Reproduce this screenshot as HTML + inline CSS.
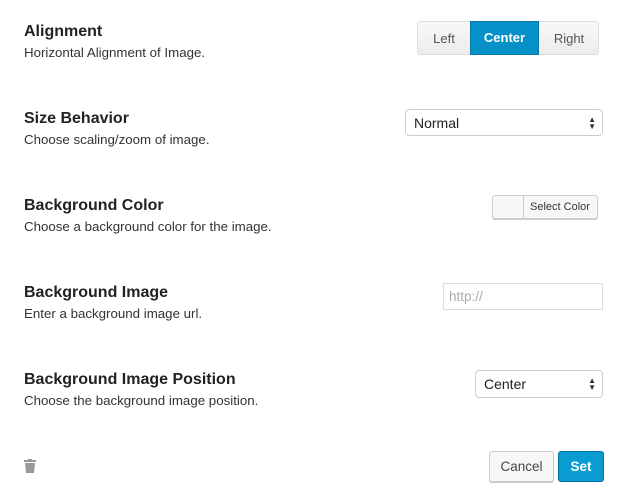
<!DOCTYPE html>
<html><head><style>
body{margin:0;width:620px;height:497px;background:#fff;font-family:"Liberation Sans",sans-serif;position:relative;overflow:hidden;color:#222}
.t{position:absolute;left:24px;font-weight:bold;font-size:16px;color:#222}
.d{position:absolute;left:24px;font-size:13.3px;color:#333}
.a{position:absolute;box-sizing:border-box}
.sel{border:1px solid #ccc;border-radius:4px;background:#fff;font-size:14px;padding-left:8px;display:flex;align-items:center}
.arr{position:absolute;right:6px;top:50%;transform:translateY(-50%);font-size:8px;line-height:7px;color:#333}
</style></head><body>
<div class="t" style="top:23px">Alignment</div>
<div class="d" style="top:45px">Horizontal Alignment of Image.</div>
<div class="t" style="top:110px">Size Behavior</div>
<div class="d" style="top:132px">Choose scaling/zoom of image.</div>
<div class="t" style="top:197px">Background Color</div>
<div class="d" style="top:219px">Choose a background color for the image.</div>
<div class="t" style="top:284px">Background Image</div>
<div class="d" style="top:306px">Enter a background image url.</div>
<div class="t" style="top:371px">Background Image Position</div>
<div class="d" style="top:393px">Choose the background image position.</div>

<div class="a" style="left:417px;top:21px;width:182px;height:34px;border:1px solid #ddd;border-radius:3px;background:linear-gradient(#f8f8f8,#ececec);font-size:13px;color:#555">
<span style="position:absolute;left:0;width:52px;top:9px;text-align:center">Left</span>
<span style="position:absolute;left:121px;width:60px;top:9px;text-align:center">Right</span>
</div>
<div class="a" style="left:470px;top:21px;width:69px;height:34px;background:#0690c8;border:1px solid #0a78a8;color:#fff;font-size:13px;font-weight:bold;text-align:center;line-height:32px">Center</div>

<div class="a sel" style="left:405px;top:109px;width:198px;height:27px">Normal<div class="arr">▲<br>▼</div></div>

<div class="a" style="left:492px;top:195px;width:106px;height:24px;border:1px solid #ccc;border-radius:3px;background:#f7f7f7;box-shadow:0 1px 0 #ccc">
<div style="position:absolute;left:30px;top:0;bottom:0;border-left:1px solid #ccc"></div>
<span style="position:absolute;left:37px;top:5px;font-size:11px;color:#333">Select Color</span></div>

<div class="a" style="left:443px;top:283px;width:160px;height:27px;border:1px solid #ddd;font-size:13.5px;color:#aaa;padding:5px 0 0 5px">http://</div>

<div class="a sel" style="left:475px;top:370px;width:128px;height:28px">Center<div class="arr">▲<br>▼</div></div>

<div class="a" style="left:489px;top:451px;width:65px;height:31px;border:1px solid #ccc;border-radius:3px;background:#f7f7f7;box-shadow:0 1px 0 #ccc;font-size:13.5px;color:#444;text-align:center;line-height:29px">Cancel</div>
<div class="a" style="left:558px;top:451px;width:46px;height:31px;border:1px solid #0073aa;border-radius:3px;background:#0a9bd0;font-size:13.5px;font-weight:bold;color:#fff;text-align:center;line-height:29px">Set</div>

<svg class="a" style="left:24px;top:459px" width="12" height="14" viewBox="0 0 12 14"><rect x="0" y="1" width="12" height="2" fill="#999"/><rect x="4" y="0" width="4" height="2" fill="#999"/><path d="M1 4h10l-1 10H2z" fill="#999"/></svg>
</body></html>
